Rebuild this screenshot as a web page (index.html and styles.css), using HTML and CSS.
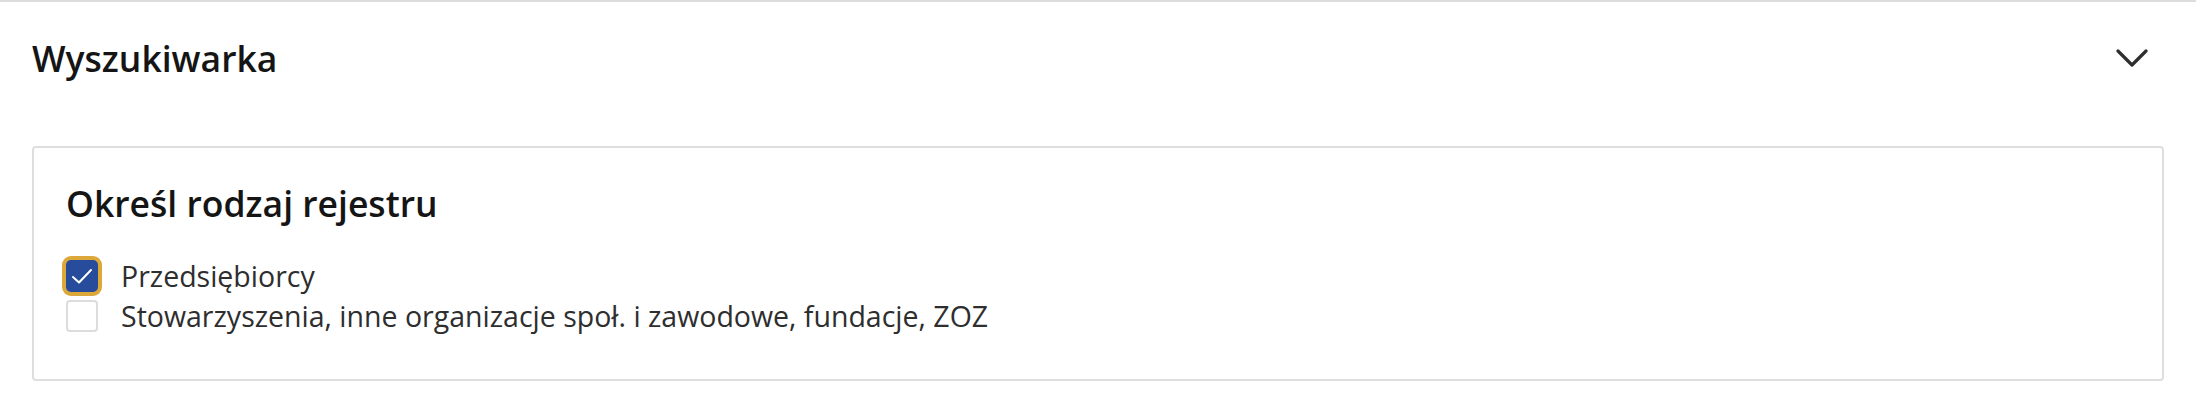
FILE: index.html
```html
<!DOCTYPE html>
<html lang="pl">
<head>
<meta charset="utf-8">
<title>Wyszukiwarka</title>
<link rel="stylesheet" href="styles.css">
</head>
<body>
<section class="panel">
  <header class="panel-header">
    <h2 class="panel-title">Wyszukiwarka</h2>
    <button class="toggle" type="button" aria-label="Zwiń">
      <svg class="chevron" width="32" height="20" viewBox="0 0 32 20" aria-hidden="true">
        <path d="M2 3 L16 17 L30 3" fill="none" stroke="#2f2f2f" stroke-width="3.2" stroke-linecap="round" stroke-linejoin="round"/>
      </svg>
    </button>
  </header>
  <div class="card">
    <h3 class="card-title">Określ rodzaj rejestru</h3>
    <ul class="options">
      <li class="option">
        <span class="box checked focused">
          <svg width="32" height="32" viewBox="0 0 32 32" aria-hidden="true">
            <path d="M7 17 L13 22.5 L25 10" fill="none" stroke="#fff" stroke-width="2" stroke-linecap="round" stroke-linejoin="round"/>
          </svg>
        </span>
        <span class="label">Przedsiębiorcy</span>
      </li>
      <li class="option">
        <span class="box"></span>
        <span class="label">Stowarzyszenia, inne organizacje społ. i zawodowe, fundacje, ZOZ</span>
      </li>
    </ul>
  </div>
</section>
</body>
</html>
```
FILE: styles.css
```css
html, body {
  margin: 0;
  padding: 0;
  background: #fff;
}
body {
  font-family: "Open Sans", "Noto Sans", "Liberation Sans", sans-serif;
  color: #2e2e2e;
}
.panel {
  border-top: 2px solid #dcdcdc;
  padding: 0 32px;
}
.panel-header {
  display: flex;
  align-items: center;
  justify-content: space-between;
  padding-top: 28px;
}
.panel-title {
  margin: 0;
  font-size: 35.5px;
  line-height: 56px;
  font-weight: 600;
  color: #151515;
}
.toggle {
  border: 0;
  background: none;
  padding: 0;
  margin-right: 16px;
  display: flex;
  align-items: center;
}
.card {
  margin-top: 60px;
  border: 2px solid #dedede;
  border-radius: 4px;
  padding: 31px 32px 43px;
}
.card-title {
  margin: 0;
  font-size: 35.5px;
  line-height: 48px;
  font-weight: 600;
  color: #151515;
}
.options {
  list-style: none;
  margin: 29px 0 0;
  padding: 0;
}
.option {
  display: flex;
  align-items: center;
  gap: 23px;
  font-size: 28.5px;
  line-height: 40px;
}
.box {
  width: 32px;
  height: 32px;
  box-sizing: border-box;
  border: 2px solid #dcdcdc;
  border-radius: 4px;
  background: #fff;
  display: flex;
  flex: none;
}
.box.checked {
  background: #274c9b;
  border-color: #274c9b;
}
.box.checked svg {
  margin: -2px;
}
.box.focused {
  box-shadow: 0 0 0 4px #dca83a;
  border-radius: 5px;
}
```
